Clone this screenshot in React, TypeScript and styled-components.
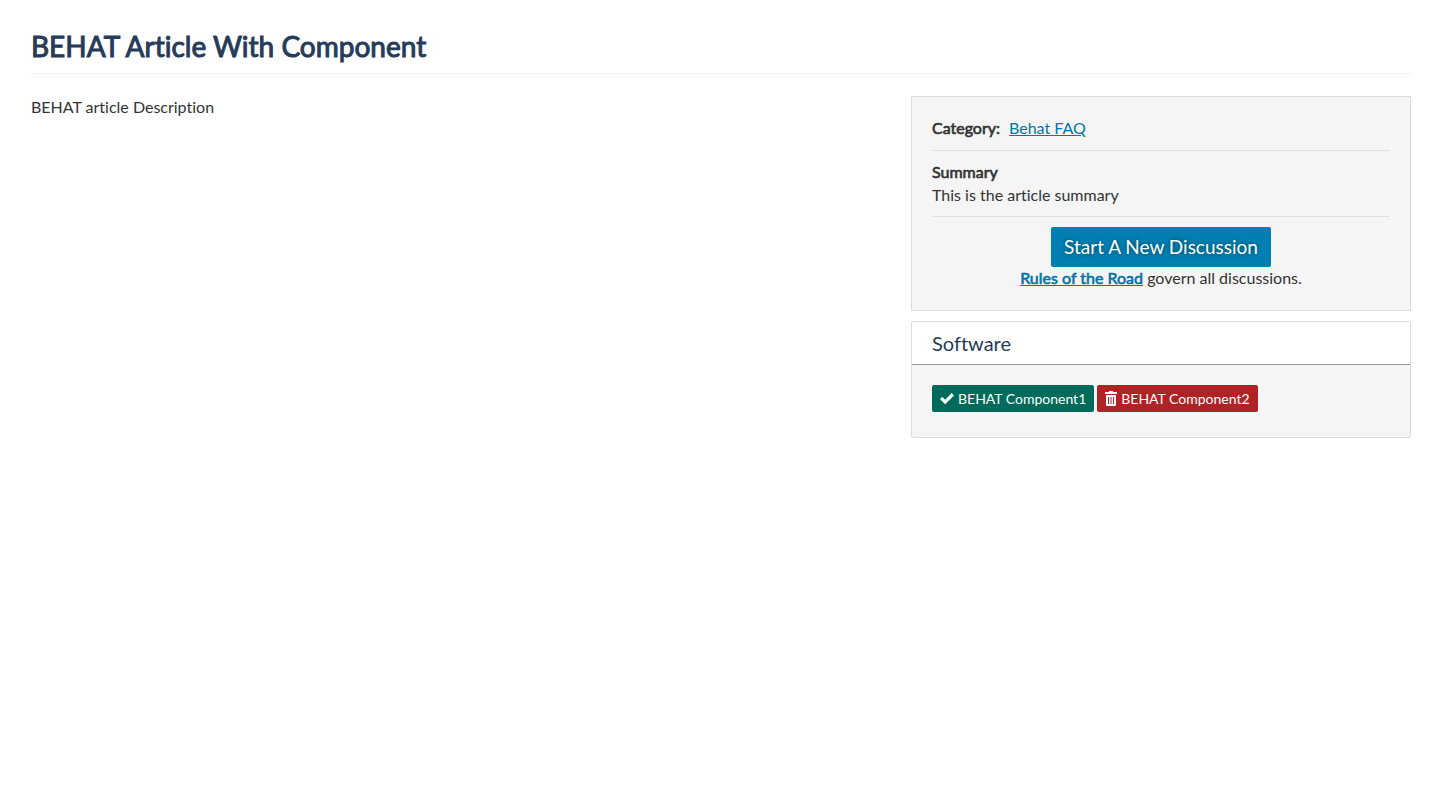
import React from "react";
import styled, { createGlobalStyle } from "styled-components";

const GlobalStyle = createGlobalStyle`
  * { box-sizing: border-box; }
  body {
    margin: 0;
    background: #fff;
    color: #333;
    font: 400 16px/23px Lato, "Liberation Sans", sans-serif;
    font-variant-ligatures: none;
  }
`;

const Page = styled.main`
  padding: 30px 31px 40px;
`;

const PageHeader = styled.header`
  margin-bottom: 22px;
  padding-bottom: 10px;
  border-bottom: 1px solid #eee;
`;

const Title = styled.h1`
  margin: 0;
  font-size: 28px;
  line-height: 33px;
  font-weight: 400;
  color: #263b59;
  -webkit-text-stroke: 1px;
`;

const Columns = styled.div`
  display: grid;
  grid-template-columns: minmax(0, 1fr) 500px;
  gap: 20px;
  align-items: start;

  @media (max-width: 900px) {
    grid-template-columns: minmax(0, 1fr);
  }
`;

const Paragraph = styled.p`
  margin: 0;
`;

const Note = styled(Paragraph)`
  line-height: 21px;
`;

const Sidebar = styled.aside`
  display: flex;
  flex-direction: column;
  gap: 10px;
`;

const Well = styled.section`
  padding: 19px 20px 22px;
  border: 1px solid #dcdcdc;
  background: #f5f5f5;
`;

const WellRow = styled.div`
  margin-bottom: 9px;
  padding-bottom: 10px;
  border-bottom: 1px solid #e0e0e0;
`;

const CategoryRow = styled(WellRow)`
  display: flex;
  gap: 9px;
  padding-bottom: 11px;
`;

const Strong = styled.strong`
  font-weight: 400;
  -webkit-text-stroke: 0.04em;
`;

const Link = styled.a`
  color: #0374a3;
  text-decoration: underline;
`;

const Discussion = styled.div`
  padding-top: 1px;
  text-align: center;
`;

const PrimaryButton = styled.button`
  display: block;
  margin: 0 auto;
  padding: 8px 13px;
  border: 0;
  border-radius: 2px;
  background: #007fb2;
  color: #fff;
  font: inherit;
  font-size: 19px;
  line-height: 24px;
  text-shadow: 0 0 4px rgba(0, 0, 0, 0.5);
  cursor: pointer;
`;

const Panel = styled.section`
  border: 1px solid #dcdcdc;
  border-radius: 2px;
  background: #f5f5f5;
`;

const PanelTitle = styled.h2`
  margin: 0;
  padding: 10px 20px;
  border-bottom: 1px solid #999;
  background: #fff;
  color: #263b59;
  font-size: 20px;
  line-height: 22px;
  font-weight: 400;
`;

const Badges = styled.div`
  display: flex;
  flex-wrap: wrap;
  gap: 3px;
  padding: 20px 20px 25px;
`;

const Badge = styled.span<{ $color: string }>`
  display: inline-flex;
  align-items: center;
  gap: 4px;
  padding: 2px 8px;
  border-radius: 2px;
  background: ${(p) => p.$color};
  color: #fff;
  font-size: 14px;
  line-height: 23px;
`;

const CheckIcon = () => (
  <svg width="14" height="15" viewBox="0 0 14 15" fill="#fff" aria-hidden="true">
    <path d="M0 8.1 2.2 5.9 5.2 8.7 11.7 2.1 14 4.4 5.2 13.2Z" />
  </svg>
);

const TrashIcon = () => (
  <svg width="12" height="15" viewBox="0 0 12 15" fill="#fff" aria-hidden="true">
    <path
      fillRule="evenodd"
      d="M4 0h4v1h4v2H0V1h4ZM1 4h10v10a1 1 0 0 1-1 1H2a1 1 0 0 1-1-1ZM3 6v7h1V6ZM5.500 6v7h1V6ZM8 6v7h1V6Z"
    />
  </svg>
);

export default function App() {
  return (
    <>
      <GlobalStyle />
      <Page>
        <PageHeader>
          <Title>BEHAT Article With Component</Title>
        </PageHeader>
        <Columns>
          <Note>BEHAT article Description</Note>
          <Sidebar>
            <Well>
              <CategoryRow>
                <Strong>Category:</Strong>
                <Link href="#category">Behat FAQ</Link>
              </CategoryRow>
              <WellRow>
                <Strong>Summary</Strong>
                <Paragraph>This is the article summary</Paragraph>
              </WellRow>
              <Discussion>
                <PrimaryButton type="button">Start A New Discussion</PrimaryButton>
                <Note>
                  <Link href="#rules">
                    <Strong>Rules of the Road</Strong>
                  </Link>{" "}
                  govern all discussions.
                </Note>
              </Discussion>
            </Well>
            <Panel>
              <PanelTitle>Software</PanelTitle>
              <Badges>
                <Badge $color="#006b5b">
                  <CheckIcon />
                  BEHAT Component1
                </Badge>
                <Badge $color="#ae2326">
                  <TrashIcon />
                  BEHAT Component2
                </Badge>
              </Badges>
            </Panel>
          </Sidebar>
        </Columns>
      </Page>
    </>
  );
}
